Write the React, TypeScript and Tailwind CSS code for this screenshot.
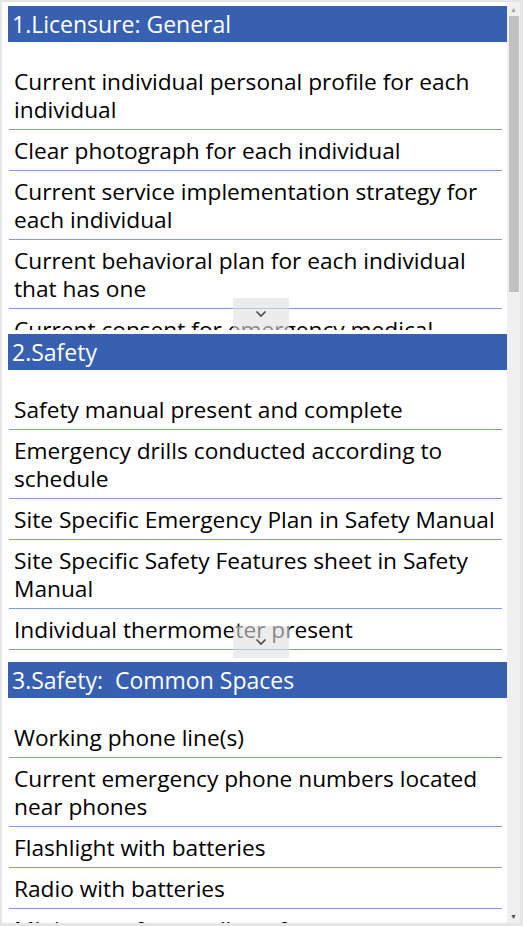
const sections = [
  {
    title: "1.Licensure: General",
    items: [
      "Current individual personal profile for each individual",
      "Clear photograph for each individual",
      "Current service implementation strategy for each individual",
      "Current behavioral plan for each individual that has one",
      "Current consent for emergency medical treatment for each individual",
    ],
  },
  {
    title: "2.Safety",
    items: [
      "Safety manual present and complete",
      "Emergency drills conducted according to schedule",
      "Site Specific Emergency Plan in Safety Manual",
      "Site Specific Safety Features sheet in Safety Manual",
      "Individual thermometer present",
      "Fire extinguisher present and charged",
    ],
  },
  {
    title: "3.Safety:  Common Spaces",
    items: [
      "Working phone line(s)",
      "Current emergency phone numbers located near phones",
      "Flashlight with batteries",
      "Radio with batteries",
      "Minimum of one gallon of water per person, 100 oz each",
    ],
  },
]

function Chevron() {
  return (
    <svg width="12" height="8" viewBox="0 0 12 8" fill="none">
      <path d="M1.5 1.5 L6 6 L10.5 1.5" stroke="#4a4a4a" strokeWidth="1.6" />
    </svg>
  )
}

function Section({ title, items, last }: { title: string; items: string[]; last?: boolean }) {
  return (
    <div className="flex flex-col shrink-0">
      <div className="h-[36px] bg-[#3860b2] flex items-center pl-[4px] text-white text-[23px] whitespace-pre leading-none">
        {title}
      </div>
      <div className={`relative overflow-hidden ${last ? "h-[230px]" : "h-[288px]"}`}>
        <div className="pt-[19px] flex flex-col">
          {items.map((t) => (
            <div
              key={t}
              className="ml-[1px] mr-[5px] border-b border-[#7f9ad6] pt-[7px] pb-[5px] pl-[5px] pr-1 text-[22.7px] leading-[28px] text-black"
            >
              {t}
            </div>
          ))}
        </div>
        {!last && (
          <div className="absolute bottom-0 left-[225px] w-[56px] h-[32px] bg-[#e0e0e0]/60 flex items-center justify-center">
            <Chevron />
          </div>
        )}
      </div>
    </div>
  )
}

export default function App() {
  return (
    <div
      className="w-[523px] h-[926px] bg-[#e6e6e6] pt-[2px] pl-[2px] pr-[3px] pb-[3px] overflow-hidden"
      style={{ fontFamily: "'Open Sans', 'Noto Sans', sans-serif" }}
    >
      <div className="h-full bg-white flex">
        <div className="flex-1 pl-[6px] pt-[4px] flex flex-col gap-[4px] overflow-hidden">
          {sections.map((s, i) => (
            <Section key={s.title} title={s.title} items={s.items} last={i === sections.length - 1} />
          ))}
        </div>
        <div className="w-[13px] bg-[#f0f0f0] flex flex-col items-center">
          <div className="h-[14px] flex items-center justify-center text-[#a3a3a3] text-[7px] leading-none">▲</div>
          <div className="w-[10px] h-[276px] bg-[#c1c1c1]" />
          <div className="flex-1" />
          <div className="h-[14px] flex items-center justify-center text-[#505050] text-[7px] leading-none">▼</div>
        </div>
      </div>
    </div>
  )
}
